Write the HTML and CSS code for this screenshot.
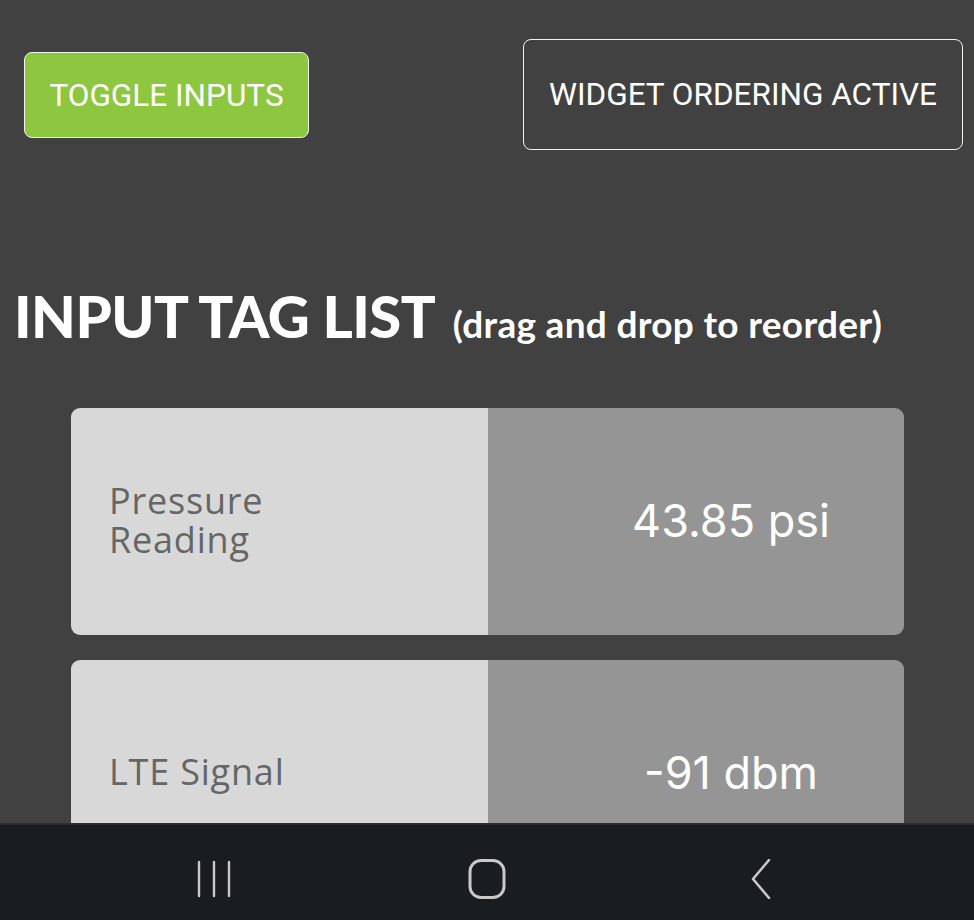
FILE: index.html
```html
<!DOCTYPE html>
<html>
<head>
<meta charset="utf-8">
<link rel="stylesheet" href="styles.css">
</head>
<body>
<div class="page">
  <div class="toolbar">
    <button class="btn btn-green">TOGGLE INPUTS</button>
    <button class="btn btn-outline">WIDGET ORDERING ACTIVE</button>
  </div>
  <h1 class="title">INPUT TAG LIST <span class="sub">(drag and drop to reorder)</span></h1>
  <div class="list">
    <div class="card">
      <div class="label">Pressure<br>Reading</div>
      <div class="value">43.85 psi</div>
    </div>
    <div class="card">
      <div class="label">LTE Signal</div>
      <div class="value">-91 dbm</div>
    </div>
  </div>
</div>
<nav class="navbar">
  <svg class="nav-icon" width="40" height="40" viewBox="0 0 40 40"><g stroke="#c8c8c8" stroke-width="2.4" stroke-linecap="round"><line x1="4" y1="3" x2="4" y2="37"/><line x1="19" y1="3" x2="19" y2="37"/><line x1="34" y1="3" x2="34" y2="37"/></g></svg>
  <svg class="nav-icon" width="40" height="40" viewBox="0 0 40 40"><rect x="3" y="1.5" width="34" height="37" rx="11" fill="none" stroke="#c8c8c8" stroke-width="3"/></svg>
  <svg class="nav-icon" width="40" height="40" viewBox="0 0 40 40"><polyline points="30,1 14,20 30,39" fill="none" stroke="#c8c8c8" stroke-width="2.6" stroke-linecap="round" stroke-linejoin="round"/></svg>
</nav>
</body>
</html>
```
FILE: styles.css
```css
html, body {
  margin: 0;
  padding: 0;
  background: #414141;
  height: 100%;
  overflow: hidden;
}
.page {
  padding: 39px 11px 0 14px;
}
.toolbar {
  display: flex;
  justify-content: space-between;
  align-items: flex-start;
  padding-left: 10px;
}
.btn {
  font-family: Roboto, "Liberation Sans", sans-serif;
  font-size: 31.5px;
  color: #ffffff;
  border: 1.5px solid #f2f2ea;
  border-radius: 8px;
  cursor: pointer;
  padding: 0;
}
.btn-green {
  margin-top: 13px;
  background: #8dc63f;
  width: 285px;
  height: 86px;
}
.btn-outline {
  background: transparent;
  width: 440px;
  height: 111px;
}
.title {
  margin: 131px 0 0 0;
  font-family: Lato, "Open Sans", sans-serif;
  font-weight: 900;
  font-size: 58px;
  color: #ffffff;
  line-height: 70px;
  letter-spacing: -0.5px;
}
.sub {
  font-size: 37px;
  font-weight: 700;
  margin-left: 6px;
  letter-spacing: 0.3px;
}
.list {
  margin: 49px 0 0 57px;
  width: 833px;
  display: flex;
  flex-direction: column;
  gap: 25px;
}
.card {
  display: flex;
  height: 227px;
  border-radius: 9px;
  overflow: hidden;
}
.label {
  width: 417px;
  background: #d8d8d8;
  color: #666666;
  font-family: "Open Sans", sans-serif;
  font-size: 36px;
  line-height: 39px;
  letter-spacing: 0.8px;
  padding-left: 38px;
  padding-bottom: 4px;
  box-sizing: border-box;
  display: flex;
  align-items: center;
}
.value {
  flex: 1;
  background: #959595;
  color: #ffffff;
  font-family: Inter, sans-serif;
  font-size: 45px;
  display: flex;
  align-items: center;
  justify-content: center;
  padding-left: 70px;
  padding-bottom: 2px;
}
.navbar {
  position: fixed;
  left: 0;
  right: 0;
  bottom: 0;
  height: 97px;
  box-sizing: border-box;
  background: #1a1d20;
  border-top: 2px solid #2b2e31;
  display: flex;
  align-items: center;
  justify-content: center;
  gap: 232px;
  padding-top: 12px;
}
.nav-icon {
  display: block;
}
```
